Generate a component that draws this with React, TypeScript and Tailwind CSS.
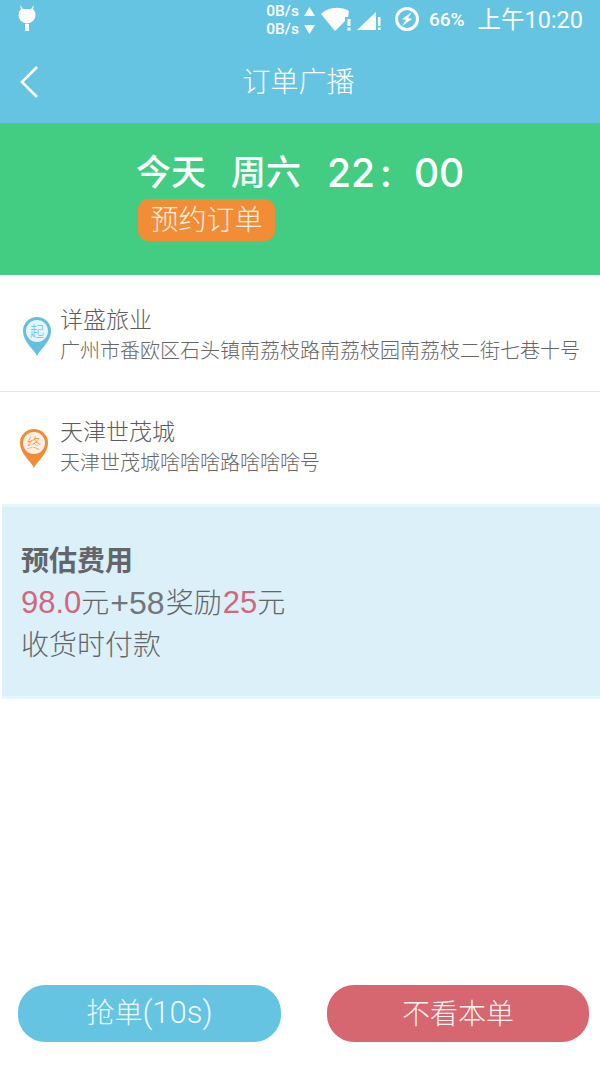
function Pin({ color, label, tint }: { color: string; label: string; tint: string }) {
  return (
    <div className="relative w-[28px] h-[39px] shrink-0">
      <svg width="28" height="39" viewBox="0 0 28 39" className="block">
        <path d="M14 39 C11 32 0 25 0 14 A14 14 0 0 1 28 14 C28 25 17 32 14 39 Z" fill={color} />
        <circle cx="14" cy="14" r="11" fill={tint} />
      </svg>
      <span className="absolute left-0 top-[5px] w-[28px] text-center text-[14px] leading-[18px] font-light" style={{ color }}>{label}</span>
    </div>
  );
}

function Rate({ label, up }: { label: string; up: boolean }) {
  return (
    <div className="flex items-center gap-[5px] h-[18px]">
      <span>{label}</span>
      <svg width="11" height="9" viewBox="0 0 11 9">
        <path d={up ? "M5.5 0 L11 9 L0 9 Z" : "M0 0 L11 0 L5.5 9 Z"} fill="#fff" />
      </svg>
    </div>
  );
}

export default function App() {
  return (
    <div className="w-[600px] h-[1067px] bg-white flex flex-col overflow-hidden font-['Inter','Noto_Sans_CJK_SC',sans-serif] text-[#666666]">
      <header className="h-[123px] bg-[#66c4e3] text-white flex flex-col shrink-0">
        <div className="h-[40px] flex items-center pl-[18px] pr-[17px] font-['Roboto','Noto_Sans_CJK_SC',sans-serif]">
          <svg width="18" height="26" viewBox="0 0 18 26" className="mt-[-5px]">
            <path d="M2 0 L5 4 L13 4 L16 0 L15 4 A8.5 8.5 0 1 1 3 4 Z" fill="#fff" />
            <rect x="7" y="19" width="4" height="7" fill="#fff" />
          </svg>
          <div className="ml-auto flex items-center">
            <div className="flex flex-col text-[15.5px] leading-[18px] font-medium mr-[6px]">
              <Rate label="0B/s" up />
              <Rate label="0B/s" up={false} />
            </div>
            <svg width="33" height="24" viewBox="0 0 33 24" className="mt-[-3px]">
              <path d="M0 7 C7 0 19 -1 28 4 L27 10 L24 10 L24 14 L14 24 Z" fill="#fff" />
              <rect x="26.5" y="12" width="3" height="7" fill="#fff" />
              <rect x="26.5" y="20.5" width="3" height="3" fill="#fff" />
            </svg>
            <svg width="25" height="24" viewBox="0 0 25 24" className="ml-[3px] mt-[-3px]">
              <path d="M0 23 L19 5 L19 23 Z" fill="#fff" />
              <rect x="21" y="10" width="2.5" height="9" fill="#fff" />
              <rect x="21" y="20.5" width="2.5" height="2.5" fill="#fff" />
            </svg>
            <svg width="26" height="26" viewBox="0 0 26 26" className="ml-[12px] mt-[-3px]">
              <circle cx="13" cy="13" r="10.5" fill="none" stroke="#fff" strokeWidth="3" />
              <path d="M18 6 L8 13 L12 14 L8 20 L18 13 L14 12 Z" fill="#fff" />
            </svg>
            <span className="ml-[9px] text-[19px] font-medium">66%</span>
            <span className="ml-[13px] text-[23.5px] leading-[26px]">上午10:20</span>
          </div>
        </div>
        <div className="relative h-[83px] flex items-center justify-center">
          <svg width="22" height="34" viewBox="0 0 22 34" className="absolute left-[19px] top-[25px]">
            <path d="M18 2 L3 17 L18 32" fill="none" stroke="#fff" strokeWidth="2.6" />
          </svg>
          <span className="text-[28px] leading-[40px] font-light mr-[3px]">订单广播</span>
        </div>
      </header>

      <section className="h-[152px] bg-[#43cd82] text-white shrink-0 pt-[27px] pl-[136px]">
        <div className="flex items-center h-[45px] text-[35px] leading-[45px] font-medium">
          <span>今天</span>
          <span className="ml-[25px]">周六</span>
          <span className="ml-[26px] text-[39px]">22</span>
          <span className="ml-[5px] text-[39px]">:</span>
          <span className="ml-[22px] text-[39px]">00</span>
        </div>
        <div className="mt-[4px] ml-[2px] w-[137px] h-[42px] bg-[#f28c37] rounded-[10px] flex items-center justify-center text-[28px] leading-[36px] font-light text-[#fff1e0]">预约订单</div>
      </section>

      <section className="h-[117px] flex items-center pl-[23px] border-b border-[#e4e8ea] shrink-0">
        <div className="mt-[7px]"><Pin color="#66bfdc" label="起" tint="#e4f5fb" /></div>
        <div className="ml-[9px] mt-[4px]">
          <div className="text-[23px] leading-[32px] font-light text-[#5c5c5c]">详盛旅业</div>
          <div className="text-[20px] leading-[31px] font-light whitespace-nowrap">广州市番欧区石头镇南荔枝路南荔枝园南荔枝二街七巷十号</div>
        </div>
      </section>

      <section className="h-[112px] flex items-center pl-[20px] shrink-0">
        <Pin color="#ef8c36" label="终" tint="#fdf0e4" />
        <div className="ml-[12px] mt-[-2px]">
          <div className="text-[23px] leading-[32px] font-light text-[#5c5c5c]">天津世茂城</div>
          <div className="text-[20px] leading-[31px] font-light whitespace-nowrap">天津世茂城啥啥啥路啥啥啥号</div>
        </div>
      </section>

      <section className="ml-[2px] h-[195px] bg-[#dbf0f9] border-y-[3px] border-[#e6f7fb] shrink-0 pt-[33px] pl-[19px] text-[#636669]">
        <div className="text-[28px] leading-[42px] font-bold">预估费用</div>
        <div className="flex items-center h-[42px] text-[28px] leading-[42px] font-light">
          <span className="text-[31px] text-[#d0677a] font-['Liberation_Sans',sans-serif]">98.0</span>
          <span>元</span>
          <span className="text-[32px] ml-[1px] mr-[1px] text-[#72757a] font-['Liberation_Sans',sans-serif]">+58</span>
          <span>奖励</span>
          <span className="text-[31px] ml-[1px] text-[#d0677a] font-['Liberation_Sans',sans-serif]">25</span>
          <span>元</span>
        </div>
        <div className="text-[28px] leading-[42px] font-light">收货时付款</div>
      </section>

      <div className="flex-1" />

      <footer className="flex justify-between pl-[18px] pr-[11px] pb-[25px] shrink-0">
        <button className="w-[263px] h-[57px] rounded-[27px] bg-[#66c4e3] text-[#eef9fd] text-[28px] font-light font-['Roboto','Noto_Sans_CJK_SC',sans-serif]">抢单<span className="text-[31px]">(10s)</span></button>
        <button className="w-[262px] h-[57px] rounded-[27px] bg-[#d6666f] text-[#fff2f2] text-[28px] font-light">不看本单</button>
      </footer>
    </div>
  );
}
